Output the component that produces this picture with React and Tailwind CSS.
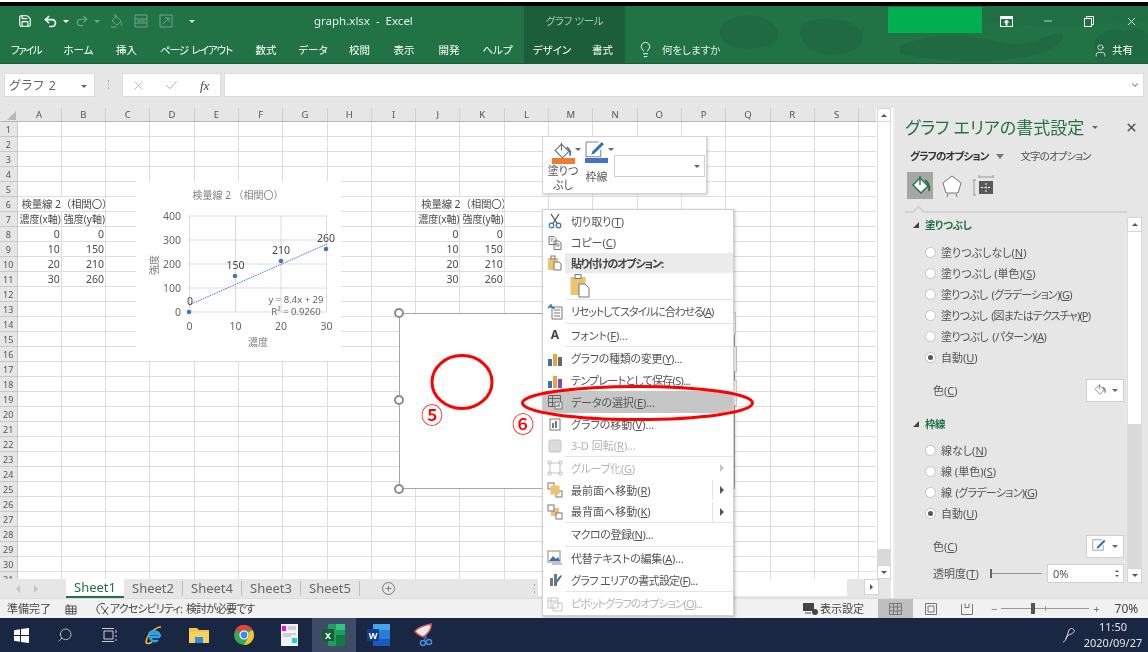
import React from 'react';
import { Save, Undo2, Redo2, Lightbulb, User, X, Minus, Check, ChevronDown, Plus, Search } from 'lucide-react';

const COLS = 'ABCDEFGHIJKLMNOPQRS'.split('').concat(['']);
const ROWS = Array.from({ length: 31 }, (_, i) => i + 1);
const CELLS = {
  '6-0': { t: '検量線 2（相関〇）', c: 'pl-[4px] text-[8.5px] tracking-[-0.2px] [font-feature-settings:normal] overflow-visible' },
  '7-0': { t: '濃度(x軸)', c: 'pl-[2px] text-[10px]' },
  '7-1': { t: '強度(y軸)', c: 'pl-[2px] text-[10px]' },
  '8-0': { t: '0', c: 'justify-end pr-[1px]' }, '8-1': { t: '0', c: 'justify-end pr-[1px]' },
  '9-0': { t: '10', c: 'justify-end pr-[1px]' }, '9-1': { t: '150', c: 'justify-end pr-[1px]' },
  '10-0': { t: '20', c: 'justify-end pr-[1px]' }, '10-1': { t: '210', c: 'justify-end pr-[1px]' },
  '11-0': { t: '30', c: 'justify-end pr-[1px]' }, '11-1': { t: '260', c: 'justify-end pr-[1px]' },
  '6-9': { t: '検量線 2（相関〇）', c: 'pl-[5px] text-[8.5px] tracking-[-0.2px] [font-feature-settings:normal] overflow-visible' },
  '7-9': { t: '濃度(x軸)', c: 'pl-[2px] text-[10px]' },
  '7-10': { t: '強度(y軸)', c: 'pl-[2px] text-[10px]' },
  '8-9': { t: '0', c: 'justify-end pr-[1px]' }, '8-10': { t: '0', c: 'justify-end pr-[1px]' },
  '9-9': { t: '10', c: 'justify-end pr-[1px]' }, '9-10': { t: '150', c: 'justify-end pr-[1px]' },
  '10-9': { t: '20', c: 'justify-end pr-[1px]' }, '10-10': { t: '210', c: 'justify-end pr-[1px]' },
  '11-9': { t: '30', c: 'justify-end pr-[1px]' }, '11-10': { t: '260', c: 'justify-end pr-[1px]' },
};

const Tri = ({ c = 'border-t-[#666]', cl = '' }) => (
  <span className={`inline-block w-0 h-0 border-x-[3px] border-x-transparent border-t-[3px] ${c} ${cl}`} />
);

function TitleBlobs() {
  return (
    <svg className="absolute left-[625px] top-0 pointer-events-none" width="523" height="58" viewBox="625 6 523 58">
      <path d="M720 28c4-10 22-14 36-12 16 2 24 14 22 22-3 9-26 12-40 10-12-2-20-10-18-20z" fill="#1f6a40" />
      <path d="M800 30c2-10 24-14 40-10 14 2 26 12 22 22-3 10-20 14-36 12-14-2-28-12-26-24z" fill="#1f6a40" />
      <path d="M900 46c30-14 70-12 100-4 22 6 44-4 60-10 10 8-10 20-30 24-40 8-90 6-130-2z" fill="#1f6a40" />
      <path d="M1095 40c6-10 22-14 30-8 10-8 23-2 23 6v26h-50c-4-8-6-16-3-24z" fill="#1f6a40" />
      <path d="M880 6h268v14c-50 6-110 8-160 2-40-4-80-6-108-16z" fill="#1f6a40" opacity="0.5" />
    </svg>
  );
}

function TopBar() {
  return (
    <div className="relative h-[58px] shrink-0 bg-[#217346] text-white flex flex-col">
      <TitleBlobs />
      <div className="relative flex h-[30px]">
        <div className="w-[314px] flex items-center pl-[18px]">
          <Save size={14} strokeWidth={2} className="shrink-0" />
          <Undo2 size={15} strokeWidth={2.6} className="ml-[11px] shrink-0" />
          <Tri c="border-t-white" cl="ml-[5px]" />
          <Redo2 size={14} className="ml-[6px] text-[#6fa688] shrink-0" />
          <Tri c="border-t-[#6fa688]" cl="ml-[5px]" />
          <svg width="16" height="16" viewBox="0 0 16 16" className="ml-[8px] shrink-0" fill="none" stroke="#6fa688"><path d="M4 8l4-5 5 5-4 4zM6 2h2v3M13 9c1 2 1 3 0 4M3 14h6" /></svg>
          <svg width="14" height="14" viewBox="0 0 14 14" className="ml-[10px] shrink-0" fill="none" stroke="#6fa688"><path d="M1 1h12v12H1zM1 5h12M1 9h12M3 7h8" /></svg>
          <svg width="14" height="14" viewBox="0 0 14 14" className="ml-[11px] shrink-0" fill="none" stroke="#6fa688"><path d="M1 1h12v12H1zM4 10l5-5M6 4h4v4" /></svg>
          <Tri c="border-t-[#ddd]" cl="ml-[16px]" />
        </div>
        <div className="w-[210px] flex items-center text-[11.5px] text-[#e8f0ea]">graph.xlsx&nbsp;&nbsp;-&nbsp;&nbsp;Excel</div>
        <div className="w-[101px] bg-[#1d5e3a] flex items-center justify-center text-[10.5px] tracking-[-0.3px] text-[#a9c6b4]">グラフ ツール</div>
        <div className="w-[263px]" />
        <div className="w-[94px] h-[26px] mt-[1px] bg-[#00b050]" />
        <div className="flex-1 flex items-center">
          <svg width="13" height="11" viewBox="0 0 13 11" className="ml-[18px] shrink-0"><rect x="0.5" y="0.5" width="12" height="10" fill="none" stroke="#fff" /><rect x="0.5" y="0.5" width="12" height="2.5" fill="#fff" /><path d="M6.5 3.5L3.5 6.5h2v3h2v-3h2z" fill="#fff" /></svg>
          <Minus size={12} strokeWidth={1.4} className="ml-[29px] shrink-0" />
          <svg width="10" height="11" viewBox="0 0 10 11" className="ml-[30px] shrink-0" fill="none" stroke="#fff"><rect x="0.5" y="2.5" width="7" height="8" /><path d="M2.5 2.5v-2h7v8h-2" /></svg>
          <X size={13} strokeWidth={1.4} className="ml-[31px] shrink-0" />
        </div>
      </div>
      <div className="relative flex h-[27px] items-stretch text-[10.5px]">
        <div className="w-[52px] flex items-center justify-center pt-[2px] tracking-[-1.5px]">ファイル</div>
        <div className="w-[53px] flex items-center justify-center pt-[2px]">ホーム</div>
        <div className="w-[43px] flex items-center justify-center pt-[2px]">挿入</div>
        <div className="w-[96px] flex items-center justify-center pt-[2px] tracking-[-1px]">ページ&nbsp;&nbsp;レイアウト</div>
        <div className="w-[44px] flex items-center justify-center pt-[2px]">数式</div>
        <div className="w-[50px] flex items-center justify-center pt-[2px]">データ</div>
        <div className="w-[43px] flex items-center justify-center pt-[2px]">校閲</div>
        <div className="w-[46px] flex items-center justify-center pt-[2px]">表示</div>
        <div className="w-[44px] flex items-center justify-center pt-[2px]">開発</div>
        <div className="w-[53px] flex items-center justify-center pt-[2px]">ヘルプ</div>
        <div className="w-[56px] bg-[#1d5e3a] flex items-center justify-center pt-[2px]">デザイン</div>
        <div className="w-[45px] bg-[#1d5e3a] flex items-center justify-center pt-[2px]">書式</div>
        <div className="w-[37px] flex items-center justify-center pl-[3px]">
          <Lightbulb size={17} strokeWidth={1.3} />
        </div>
        <div className="flex-1 flex items-center pt-[2px] text-[#e6efe9]">何をしますか</div>
        <div className="flex items-center pr-[15px] gap-[4px] pt-[2px]">
          <User size={15} strokeWidth={1.2} />
          <span>共有</span>
        </div>
      </div>
      <div className="relative h-[1px] bg-[#1a5c38]" />
    </div>
  );
}

function FormulaBar() {
  return (
    <div className="h-[44px] shrink-0 bg-[#e6e6e6] flex items-start pt-[9px] pl-[4px] text-[#666]">
      <div className="w-[91px] h-[24px] bg-white border border-[#dcdcdc] flex items-center pt-[2px] pl-[4px] pr-[7px] justify-between text-[12.5px] tracking-[1px]">
        <span>グラフ 2</span><Tri />
      </div>
      <div className="w-[27px] flex flex-col items-center gap-[2px] pt-[7px]">
        <span className="w-[1.5px] h-[1.5px] bg-[#aaa]" /><span className="w-[1.5px] h-[1.5px] bg-[#aaa]" /><span className="w-[1.5px] h-[1.5px] bg-[#aaa]" />
      </div>
      <div className="w-[99px] h-[24px] bg-white border border-[#dcdcdc] flex items-center pl-[8px]">
        <X size={15} strokeWidth={1.2} className="text-[#aaa]" />
        <Check size={15} strokeWidth={1.6} className="text-[#aaa] ml-[18px]" />
        <span className="ml-[21px] text-[13px] italic [font-family:'Liberation_Serif',serif] text-[#444]">fx</span>
      </div>
      <div className="ml-[3px] w-[920px] h-[24px] bg-white border border-[#dcdcdc] flex items-center justify-end pr-[3px]">
        <ChevronDown size={10} strokeWidth={2.5} className="text-[#777]" />
      </div>
    </div>
  );
}

function Sheet() {
  return (
    <div className="w-[879px] flex flex-col overflow-hidden h-[471px] bg-white">
      <div className="flex h-[14px] shrink-0 bg-[#e6e6e6] border-b border-[#b5b5b5]">
        <div className="w-[17.5px] shrink-0 relative">
          <span className="absolute right-[2px] bottom-[1px] w-0 h-0 border-l-[9px] border-l-transparent border-b-[9px] border-b-[#b8b8b8]" />
        </div>
        {COLS.map((c, i) => (
          <div key={i} className="w-[44.3px] shrink-0 flex items-center justify-center text-[9.5px] text-[#555] border-r border-[#cfcfcf]">{c}</div>
        ))}
      </div>
      {ROWS.map((r) => (
        <div key={r} className="flex h-[15px] shrink-0">
          <div className="w-[17.5px] shrink-0 bg-[#e6e6e6] border-b border-r border-[#c8c8c8] flex items-center justify-center text-[9px] text-[#555]">{r}</div>
          {COLS.map((c, i) => {
            const cell = CELLS[`${r}-${i}`];
            return (
              <div key={i} className={`w-[44.3px] shrink-0 border-r border-b border-[#dedede] flex items-center text-[10.5px] text-[#4a4a4a] whitespace-nowrap ${cell ? cell.c : ''} ${r === 6 && (i === 0 || i === 9) ? 'border-r-transparent' : ''}`}>
                {cell ? cell.t : null}
              </div>
            );
          })}
        </div>
      ))}
    </div>
  );
}

function Chart() {
  const pts = [[189, 312], [235, 276], [281, 261], [326, 249]];
  return (
    <svg className="absolute left-[136px] top-[181px] bg-white" width="205" height="180" viewBox="136 181 205 180">
      {[189.5, 235.5, 281, 326.5].map((x) => <line key={x} x1={x} x2={x} y1="216" y2="312" stroke="#dcdcdc" />)}
      {[216, 240, 264, 288, 312].map((y) => <line key={y} x1="189" x2="327" y1={y} y2={y} stroke="#dcdcdc" />)}
      <line x1="189" y1="305" x2="327" y2="244" stroke="#4472c4" strokeWidth="1" strokeDasharray="1.5 1" />
      {pts.map((p) => <circle key={p[0]} cx={p[0]} cy={p[1]} r="2.3" fill="#4472c4" />)}
      <text x="238" y="199" textAnchor="middle" fontSize="10" fill="#808080" className="[font-feature-settings:normal]">検量線 2 （相関〇）</text>
      {[[400, 220], [300, 244], [200, 268], [100, 292], [0, 316]].map(([v, y]) => (
        <text key={v} x="181" y={y} textAnchor="end" fontSize="10.5" fill="#666">{v}</text>
      ))}
      {[[0, 189.5], [10, 235.5], [20, 281], [30, 326.5]].map(([v, x]) => (
        <text key={v} x={x} y="330" textAnchor="middle" fontSize="10.5" fill="#666">{v}</text>
      ))}
      {[['0', 190, 305], ['150', 235.5, 269], ['210', 281, 254], ['260', 326, 242]].map(([v, x, y]) => (
        <text key={v} x={x} y={y} textAnchor="middle" fontSize="10.5" fill="#444">{v}</text>
      ))}
      <text x="258" y="346" textAnchor="middle" fontSize="10" fill="#808080">濃度</text>
      <text transform="translate(158 265) rotate(-90)" textAnchor="middle" fontSize="10" fill="#808080">強度</text>
      <text x="296" y="303" textAnchor="middle" fontSize="9.5" fill="#666">y = 8.4x + 29</text>
      <text x="296" y="315" textAnchor="middle" fontSize="9.5" fill="#666">R² = 0.9260</text>
    </svg>
  );
}

const Bucket = ({ w = 20, stroke = '#666', blue = '#2e75b6' }) => (
  <svg width={w} height={w} viewBox="0 0 20 20" fill="none" className="shrink-0">
    <path d="M9 3l7 7-6 6-7-7z" fill="#fff" stroke={stroke} />
    <path d="M9 9V1.5" stroke={stroke} />
    <path d="M14 6c3 2 4 5 3 8" stroke={blue} strokeWidth="1.6" />
  </svg>
);
const Pen = ({ w = 20 }) => (
  <svg width={w} height={w} viewBox="0 0 20 20" fill="none" className="shrink-0">
    <path d="M1 1h12M1 1v14h14V8" stroke="#888" />
    <path d="M6 13l1-3 9-9 2 2-9 9z" fill="#2e75b6" />
  </svg>
);

function MiniBar() {
  return (
    <div className="absolute left-[542px] top-[136px] w-[165px] h-[58px] bg-white border border-[#d4d4d4] shadow-[1px_1px_2px_rgba(0,0,0,0.2)] flex text-[11px] text-[#555]">
      <div className="w-[35px] pl-[5px] pt-[4px] flex flex-col items-center">
        <div className="relative w-[23px] h-[23px] shrink-0">
          <Bucket w={21} />
          <span className="absolute left-0 right-0 bottom-0 h-[6px] bg-[#ed7d31]" />
          <Tri cl="absolute right-[-6px] top-[7px]" />
        </div>
        <div className="leading-[14px] text-center whitespace-nowrap">塗りつ<br />ぶし</div>
      </div>
      <div className="w-[36px] pl-[1px] pt-[4px] flex flex-col items-center">
        <div className="relative w-[23px] h-[23px] shrink-0">
          <Pen w={21} />
          <span className="absolute left-0 right-0 bottom-[1px] h-[5px] bg-[#4472c4]" />
          <Tri cl="absolute right-[-6px] top-[7px]" />
        </div>
        <div className="mt-[6px] leading-[14px]">枠線</div>
      </div>
      <div className="mt-[18px] w-[91px] h-[22px] border border-[#d0d0d0] flex items-center justify-end pr-[4px]"><Tri /></div>
    </div>
  );
}

const Bars = ({ extra }) => (
  <svg width="16" height="16" viewBox="0 0 16 16">
    <rect x="1" y="8" width="4" height="7" fill="#2e75b6" />
    <rect x="6" y="3" width="4" height="12" fill="#e8a33d" />
    <rect x="11" y="6" width="4" height="9" fill={extra || '#666'} />
  </svg>
);
const Box = ({ d, stroke = '#777', fill = 'none' }) => (
  <svg width="16" height="16" viewBox="0 0 16 16" fill={fill} stroke={stroke}><path d={d} /></svg>
);
const Order = ({ front }) => (
  <svg width="16" height="16" viewBox="0 0 16 16">
    {front ? (
      <>
        <rect x="1" y="1" width="6" height="6" fill="#fff" stroke="#777" />
        <rect x="9" y="9" width="6" height="6" fill="#fff" stroke="#777" />
        <rect x="3.5" y="3.5" width="9" height="9" fill="#eec36f" />
      </>
    ) : (
      <>
        <rect x="4" y="4" width="8" height="8" fill="#eec36f" />
        <rect x="1" y="1" width="6" height="6" fill="#fff" stroke="#777" />
        <rect x="9" y="9" width="6" height="6" fill="#fff" stroke="#777" />
      </>
    )}
  </svg>
);
const Shears = () => (
  <svg width="14" height="16" viewBox="0 0 14 16" fill="none">
    <path d="M3 1l6.500 10M11 1L4.500 11" stroke="#555" strokeWidth="1.300" />
    <circle cx="3.500" cy="12.500" r="2.300" stroke="#2e75b6" strokeWidth="1.200" />
    <circle cx="10.500" cy="12.500" r="2.300" stroke="#2e75b6" strokeWidth="1.200" />
  </svg>
);
const DataSel = () => (
  <svg width="16" height="16" viewBox="0 0 16 16" fill="none">
    <path d="M1.500 1.500h12v11h-12zM1.500 4.500h12M5.500 1.500v11M1.500 8.500h6" stroke="#666" />
    <rect x="8" y="8" width="7" height="7" fill="#e6e6e6" stroke="#777" />
    <path d="M10 13v-2M12 13v-3.500" stroke="#555" />
  </svg>
);

const MENU = [
  { h: 'h-[22px]', i: <Shears />, t: '切り取り(', k: 'T', s: ')' },
  { h: 'h-[21px]', i: <Box d="M2 1.5h5l2 2v6H2zM7 6h5l2 2v6.5H7zM3.5 4h3M3.5 6h2M8.5 9h4M8.5 11h4" />, t: 'コピー(', k: 'C', s: ')' },
  { h: 'h-[20px]', head: true, tr: 'tracking-[-1.2px]', i: <svg width="16" height="16" viewBox="0 0 16 16"><rect x="1" y="3" width="10" height="12" fill="#eec36f" /><rect x="4" y="1" width="4" height="3" fill="#fff" stroke="#777" /><path d="M7 7h5l2 2v6H7z" fill="#fff" stroke="#777" /></svg>, t: '貼り付けのオプション:' },
  { h: 'h-[26px]', paste: true },
  { div: true },
  { h: 'h-[23px]', tr: 'tracking-[-1.1px]', i: <svg width="16" height="16" viewBox="0 0 16 16" fill="none"><path d="M5 3h10v12H5zM7 6h6M7 9h6M7 12h6" stroke="#777" /><path d="M1 4l3-3v2c2 0 3 1 3 2" stroke="#2e75b6" strokeWidth="1.5" /></svg>, t: 'リセットしてスタイルに合わせる(', k: 'A', s: ')' },
  { div: true },
  { h: 'h-[22px]', i: <span className="text-[12px] font-bold text-[#444]">A</span>, t: 'フォント(', k: 'F', s: ')...' },
  { div: true },
  { h: 'h-[23px]', tr: 'tracking-[-0.3px]', i: <Bars />, t: 'グラフの種類の変更(', k: 'Y', s: ')...' },
  { h: 'h-[21px]', tr: 'tracking-[-0.7px]', i: <Bars extra="#7a4fb5" />, t: 'テンプレートとして保存(', k: 'S', s: ')...' },
  { h: 'h-[22px]', sel: true, tr: 'tracking-[-0.1px]', i: <DataSel />, t: 'データの選択(', k: 'E', s: ')...' },
  { h: 'h-[22px]', i: <svg width="16" height="16" viewBox="0 0 16 16" fill="none"><rect x="3" y="3" width="10" height="11" stroke="#777" /><rect x="5" y="7" width="2" height="5" fill="#777" /><rect x="8" y="5" width="2" height="7" fill="#777" /></svg>, t: 'グラフの移動(', k: 'V', s: ')...' },
  { h: 'h-[21px]', dis: true, i: <svg width="14" height="14" viewBox="0 0 14 14"><rect x="1" y="1" width="12" height="12" rx="2" fill="#dcdcdc" stroke="#c4c4c4" /></svg>, t: '3-D 回転(', k: 'R', s: ')...' },
  { div: true },
  { h: 'h-[22px]', dis: true, arrow: true, tr: 'tracking-[-0.3px]', i: <Box d="M3 3h10v10H3zM1 1h3v3H1zM12 1h3v3h-3zM1 12h3v3H1zM12 12h3v3h-3z" stroke="#c4c4c4" />, t: 'グループ化(', k: 'G', s: ')' },
  { h: 'h-[22px]', arrow: true, line: true, i: <Order front />, t: '最前面へ移動(', k: 'R', s: ')' },
  { h: 'h-[21px]', arrow: true, line: true, i: <Order />, t: '最背面へ移動(', k: 'K', s: ')' },
  { div: true },
  { h: 'h-[23px]', tr: 'tracking-[-0.4px]', t: 'マクロの登録(', k: 'N', s: ')...' },
  { div: true },
  { h: 'h-[22px]', tr: 'tracking-[-0.2px]', i: <svg width="16" height="16" viewBox="0 0 16 16" fill="none"><rect x="1" y="1" width="12" height="11" stroke="#888" /><path d="M2 11l4-5 3 3 2-2 2 4z" fill="#2e75b6" /><path d="M5 14h10" stroke="#888" /></svg>, t: '代替テキストの編集(', k: 'A', s: ')...' },
  { h: 'h-[22px]', tr: 'tracking-[-0.6px]', i: <svg width="16" height="16" viewBox="0 0 16 16"><rect x="3" y="6" width="3" height="8" fill="#777" /><rect x="7" y="2" width="3" height="12" fill="#777" /><path d="M11 6l3-3 1 1-5 7-3 3z" fill="#2e75b6" /></svg>, t: 'グラフ エリアの書式設定(', k: 'F', s: ')...' },
  { div: true },
  { h: 'h-[23px]', dis: true, tr: 'tracking-[-1px]', i: <Box d="M1 2h10v10H1zM1 5h10M4 2v10M6 7h9v8H6z" stroke="#c4c4c4" fill="#fff" />, t: 'ピボットグラフのオプション(', k: 'O', s: ')...' },
];

function ContextMenu() {
  return (
    <div className="absolute left-[542px] top-[209px] w-[192px] bg-white border border-[#d0d0d0] shadow-[1px_1px_3px_rgba(0,0,0,0.25)] flex flex-col text-[11px] text-[#555]">
      {MENU.map((m, idx) => {
        if (m.div) return <div key={idx} className="h-[1px] ml-[22px] bg-[#e4e4e4]" />;
        if (m.paste) return (
          <div key={idx} className={`${m.h} flex items-center pl-[27px]`}>
            <svg width="20" height="24" viewBox="0 0 20 24"><rect x="0.5" y="3" width="15" height="18" fill="#eec36f" /><rect x="5" y="0.5" width="6" height="4" fill="#fff" stroke="#777" /><path d="M9 10h6l4 4v9H9z" fill="#fff" stroke="#777" /></svg>
          </div>
        );
        return (
          <div key={idx} className={`${m.h} flex items-center ${m.sel ? 'bg-[#c6c6c6]' : ''} ${m.dis ? 'text-[#b4b4b4]' : ''}`}>
            <div className="w-[24px] h-full flex items-center justify-center shrink-0">{m.i}</div>
            <div className={`flex-1 h-full flex items-center pl-[4px] whitespace-nowrap ${m.tr || ''} ${m.head ? 'bg-[#ebebeb] -ml-[2px] pl-[6px] font-bold text-[#444]' : ''}`}>
              <span>{m.t}{m.k ? <u>{m.k}</u> : null}{m.s}</span>
            </div>
            {m.arrow ? (
              <div className="flex items-center pr-[9px]">
                {m.line ? <span className="w-[1px] h-[20px] bg-[#e6e6e6] mr-[7px]" /> : null}
                <span className={`w-0 h-0 border-y-[4px] border-y-transparent border-l-[4px] ${m.dis ? 'border-l-[#c4c4c4]' : 'border-l-[#555]'}`} />
              </div>
            ) : null}
          </div>
        );
      })}
    </div>
  );
}

function SelectedChart() {
  const H = 'absolute w-[10px] h-[10px] rounded-full bg-white border-2 border-[#8c8c8c]';
  return (
    <>
      <div className="absolute left-[399px] top-[313px] w-[336px] h-[176px] bg-white border border-[#a6a6a6]" />
      <span className={`${H} left-[394px] top-[308px]`} />
      <span className={`${H} left-[394px] top-[395px]`} />
      <span className={`${H} left-[394px] top-[484px]`} />
      <div className="absolute left-[730px] top-[312px] w-[6px] h-[23px] bg-white border border-[#d0d0d0]" />
      <div className="absolute left-[730px] top-[346px] w-[7px] h-[26px] bg-white border border-[#c4c4c4]" />
      <div className="absolute left-[730px] top-[380px] w-[7px] h-[26px] bg-white border border-[#d0d0d0]" />
    </>
  );
}

function Annotations() {
  return (
    <>
      <svg className="absolute left-[430px] top-[353px]" width="65" height="58"><ellipse cx="32" cy="29" rx="30" ry="26.500" fill="none" stroke="#f00" strokeWidth="3" /></svg>
      <svg className="absolute left-[520px] top-[384px]" width="235" height="38"><ellipse cx="117.500" cy="19" rx="115" ry="16.500" fill="none" stroke="#f00" strokeWidth="3" /></svg>
      <span className="absolute left-[421px] top-[398px] text-[22px] leading-[32px] text-[#f00] font-medium">⑤</span>
      <span className="absolute left-[512px] top-[407px] text-[22px] leading-[32px] text-[#f00] font-medium">⑥</span>
    </>
  );
}

const Radio = ({ on, tr = '', children }) => (
  <div className="h-[21px] flex items-center pl-[18px] text-[11px] text-[#555]">
    <span className="w-[11px] h-[11px] rounded-full bg-white border border-[#c4c4c4] flex items-center justify-center shrink-0">
      {on ? <span className="w-[5px] h-[5px] rounded-full bg-[#555]" /> : null}
    </span>
    <span className={`ml-[5px] whitespace-nowrap ${tr}`}>{children}</span>
  </div>
);
const SecHead = ({ children }) => (
  <div className="h-[21px] flex items-center pl-[6px] text-[10.5px] tracking-[-0.4px] font-bold text-[#217346]">
    <span className="w-0 h-0 border-l-[6px] border-l-transparent border-b-[6px] border-b-[#444]" />
    <span className="ml-[6px]">{children}</span>
  </div>
);
const ColorBtn = ({ children }) => (
  <div className="w-[38px] h-[23px] bg-white border border-[#d0d0d0] flex items-center justify-center gap-[5px]">
    {children}<Tri />
  </div>
);

function Panel() {
  return (
    <div className="w-[255px] h-[490px] shrink-0 bg-[#e6e6e6] flex flex-col pl-[12px] border-l-[2px] border-l-[#ececec] ml-[2px] -mr-[2px] text-[#555]">
      <div className="h-[38px] flex items-center shrink-0 -ml-[2px]">
        <span className="text-[17px] text-[#217346] whitespace-nowrap">グラフ エリアの書式設定</span>
        <Tri cl="ml-[8px]" />
        <X size={13} strokeWidth={3} className="ml-[27px] text-[#555] shrink-0" />
      </div>
      <div className="h-[20px] flex items-center text-[10.5px] tracking-[-0.9px] shrink-0 pl-[3px]">
        <span className="font-bold text-[#333]">グラフのオプション</span>
        <span className="ml-[7px] w-0 h-0 border-x-[4px] border-x-transparent border-t-[5px] border-t-[#777]" />
        <span className="ml-[17px]">文字のオプション</span>
      </div>
      <div className="flex items-center h-[27px] mt-[6px] shrink-0">
        <div className="w-[26px] h-[27px] bg-[#a6a6a6] flex items-center justify-center">
          <svg width="22" height="22" viewBox="0 0 22 22" fill="none">
            <path d="M11 3l8 8-7 7-8-8z" fill="#fff" stroke="#217346" strokeWidth="1.400" />
            <path d="M11 10V1" stroke="#217346" strokeWidth="1.400" />
            <path d="M16 5c4 3 5 8 4 11" stroke="#217346" strokeWidth="2" />
          </svg>
        </div>
        <svg width="22" height="24" viewBox="0 0 22 24" className="ml-[8px]" fill="none">
          <path d="M11 2l9 7-3 10H5L2 9z" fill="#fff" stroke="#777" />
          <path d="M6 23l1-3M16 23l-1-3" stroke="#777" />
        </svg>
        <svg width="22" height="22" viewBox="0 0 22 22" className="ml-[10px]" fill="none">
          <rect x="6" y="6" width="14" height="13" fill="#595959" />
          <path d="M13 8v9M8 12.500h10" stroke="#fff" strokeDasharray="2 1.500" />
          <path d="M1 5v15M0 5h3M0 20h3M6 2h14M6 0v3M20 0v3" stroke="#999" />
        </svg>
      </div>
      <div className="relative h-[14px] shrink-0 border-b-[2px] border-[#d4d4d4] mr-[21px] -ml-[2px]">
        <span className="absolute left-[9px] bottom-[-5px] w-[9px] h-[9px] rotate-45 bg-[#e6e6e6] border-l-[2px] border-t-[2px] border-[#d4d4d4]" />
      </div>
      <div className="flex flex-1 min-h-0">
        <div className="w-[221px] shrink-0 pt-[1.500px]">
          <SecHead>塗りつぶし</SecHead>
          <div className="mt-[6px]">
            <Radio>塗りつぶしなし(<u>N</u>)</Radio>
            <Radio>塗りつぶし (単色)(<u>S</u>)</Radio>
            <Radio tr="tracking-[-0.8px]">塗りつぶし&nbsp;&nbsp;(グラデーション)(<u>G</u>)</Radio>
            <Radio tr="tracking-[-0.85px]">塗りつぶし&nbsp;&nbsp;(図またはテクスチャ)(<u>P</u>)</Radio>
            <Radio tr="tracking-[-0.7px]">塗りつぶし&nbsp;&nbsp;(パターン)(<u>A</u>)</Radio>
            <Radio on>自動(<u>U</u>)</Radio>
          </div>
          <div className="mt-[11px] h-[23px] flex items-center justify-between pl-[26px] pr-[4px] text-[11px]">
            <span>色(<u>C</u>)</span>
            <ColorBtn><Bucket w={14} /></ColorBtn>
          </div>
          <div className="mt-[12px]"><SecHead>枠線</SecHead></div>
          <div className="mt-[5px]">
            <Radio>線なし(<u>N</u>)</Radio>
            <Radio>線 (単色)(<u>S</u>)</Radio>
            <Radio tr="tracking-[-0.7px]">線&nbsp;&nbsp;(グラデーション)(<u>G</u>)</Radio>
            <Radio on>自動(<u>U</u>)</Radio>
          </div>
          <div className="mt-[11px] h-[23px] flex items-center justify-between pl-[26px] pr-[4px] text-[11px]">
            <span>色(<u>C</u>)</span>
            <ColorBtn><Pen w={15} /></ColorBtn>
          </div>
          <div className="mt-[6px] h-[19px] flex items-center pl-[26px] pr-[4px] text-[11px]">
            <span className="w-[56px] whitespace-nowrap">透明度(<u>T</u>)</span>
            <div className="relative w-[52px] h-[1px] bg-[#999] ml-[1px]">
              <span className="absolute left-0 top-[-4px] w-[2px] h-[9px] bg-[#666]" />
            </div>
            <div className="ml-[5px] flex-1 h-[19px] bg-white border border-[#d0d0d0] flex items-center justify-between pl-[5px] pr-[4px]">
              <span>0%</span>
              <span className="flex flex-col gap-[3px]"><span className="w-0 h-0 border-x-[2px] border-x-transparent border-b-[2px] border-b-[#555]" /><span className="w-0 h-0 border-x-[2px] border-x-transparent border-t-[2px] border-t-[#555]" /></span>
            </div>
          </div>
        </div>
        <div className="w-[15px] ml-[-1px] mt-[4px] h-[366px] flex flex-col shrink-0 bg-[#dadada]">
          <div className="h-[15px] bg-white border border-[#d4d4d4] flex items-center justify-center"><span className="w-0 h-0 border-x-[3px] border-x-transparent border-b-[3px] border-b-[#555]" /></div>
          <div className="h-[192px] bg-white border-x border-[#e0e0e0]" />
          <div className="flex-1" />
          <div className="h-[15px] bg-white border border-[#d4d4d4] flex items-center justify-center"><Tri c="border-t-[#555]" /></div>
        </div>
      </div>
    </div>
  );
}

function SheetTabs() {
  const others = ['Sheet2', 'Sheet4', 'Sheet3', 'Sheet5'];
  return (
    <div className="h-[19px] shrink-0 bg-[#e6e6e6] flex text-[13px] text-[#666]">
      <div className="w-[66px] flex items-center pl-[16px] gap-[14px]">
        <span className="w-0 h-0 border-y-[4px] border-y-transparent border-r-[4px] border-r-[#c4c4c4]" />
        <span className="w-0 h-0 border-y-[4px] border-y-transparent border-l-[4px] border-l-[#c4c4c4]" />
      </div>
      <div className="w-[58px] bg-white border-b-2 border-[#217346] text-[#217346] flex items-center justify-center">Sheet1</div>
      {others.map((s) => (
        <div key={s} className="w-[59px] flex items-center justify-center border-r border-[#bdbdbd] my-[2px]">{s}</div>
      ))}
      <div className="w-[56px] flex items-center justify-center">
        <span className="w-[13px] h-[13px] rounded-full border border-[#777] flex items-center justify-center"><Plus size={9} /></span>
      </div>
      <div className="w-[122px] flex flex-col items-end justify-center gap-[2px] pr-[3px]">
        <span className="w-[1.500px] h-[1.500px] bg-[#aaa]" /><span className="w-[1.500px] h-[1.500px] bg-[#aaa]" /><span className="w-[1.500px] h-[1.500px] bg-[#aaa]" />
      </div>
      <div className="w-[309px] bg-white mb-[2px]" />
      <div className="flex-1 flex justify-end">
        <div className="w-[15px] h-[16px] bg-white border border-[#d4d4d4] flex items-center justify-center mr-[12px]"><span className="w-0 h-0 border-y-[3px] border-y-transparent border-l-[3px] border-l-[#555]" /></div>
      </div>
    </div>
  );
}

function StatusBar() {
  return (
    <div className="h-[20px] shrink-0 bg-[#f1f1f1] border-t border-[#dcdcdc] flex items-center text-[11px] text-[#444] whitespace-nowrap">
      <span className="w-[65px] pl-[7px]">準備完了</span>
      <svg width="12" height="12" viewBox="0 0 12 12" fill="none" stroke="#555"><path d="M1 3h10v8H1zM3 1v3M1 6h10M1 8.500h10M4 3v8M7.500 3v8" /></svg>
      <svg width="15" height="15" viewBox="0 0 15 15" className="ml-[17px]" fill="none" stroke="#444"><path d="M11 3A5.500 5.500 0 1 0 6 13" /><path d="M7 5l7 9M14 6l-5 7" /></svg>
      <span className="ml-[1px] w-[693px] tracking-[-0.9px]">アクセシビリティ:&nbsp;&nbsp;検討が必要です</span>
      <svg width="16" height="14" viewBox="0 0 16 14"><rect x="0" y="1" width="11" height="8" fill="#444" /><path d="M2 11h6" stroke="#444" /><circle cx="12" cy="10" r="3" fill="#444" /></svg>
      <span className="ml-[1px] w-[58px] text-[11px]">表示設定</span>
      <div className="w-[35px] h-[19px] bg-[#bfbfbf] flex items-center justify-center">
        <svg width="13" height="12" viewBox="0 0 13 12" fill="none" stroke="#777"><path d="M.5.5h12v11H.5zM.5 4h12M.5 8h12M4.500.5v11M8.500.5v11" /></svg>
      </div>
      <div className="w-[36px] flex justify-center">
        <svg width="12" height="12" viewBox="0 0 12 12" fill="none" stroke="#777"><path d="M.5.5h11v11H.5zM3 3h6v6H3z" /></svg>
      </div>
      <div className="w-[36px] flex justify-center">
        <svg width="12" height="12" viewBox="0 0 12 12" fill="none" stroke="#777"><path d="M.5 1v10.500h11V1M4 .5v4h4v-4" /></svg>
      </div>
      <span className="ml-[6px] text-[#777]">−</span>
      <div className="relative w-[88px] h-[1px] bg-[#999] mx-[4px]">
        <span className="absolute left-[30px] top-[-5px] w-[4px] h-[11px] bg-[#555]" />
        <span className="absolute left-[44px] top-[-2px] w-[1px] h-[5px] bg-[#999]" />
      </div>
      <span className="text-[#777]">+</span>
      <span className="ml-[15px] text-[12px]">70%</span>
    </div>
  );
}

const Slot = ({ c, children }) => <div className={`h-full flex items-center justify-center ${c}`}>{children}</div>;

function Taskbar() {
  return (
    <div className="h-[34px] shrink-0 bg-[#1a2742] flex items-stretch text-white">
      <Slot c="w-[43px]">
        <svg width="15" height="15" viewBox="0 0 15 15" fill="#fff"><path d="M0 2.200l6-.9v5.700H0zM7 1.100l8-1.100v7H7zM0 8h6v5.700l-6-.9zM7 8h8v7l-8-1.100z" /></svg>
      </Slot>
      <Slot c="w-[44px]"><Search size={16} strokeWidth={1.2} className="-scale-x-100 text-[#ddd]" /></Slot>
      <Slot c="w-[43px]">
        <svg width="16" height="14" viewBox="0 0 16 14" fill="none" stroke="#ccc"><path d="M3 3h9v8H3zM1 .5h12M1 13.500h12M15 2v3M15 7v2M15 11v2" /></svg>
      </Slot>
      <Slot c="w-[47px]">
        <svg width="22" height="22" viewBox="0 0 22 22" fill="none">
          <path d="M18 3C13 3 4 10 3 18c0 2 3 2 6 0" stroke="#f2b632" strokeWidth="1.600" />
          <path d="M17 13h-10c1 5 6 5 8 3M6 10a6 6 0 0 1 11 3M7 10h8" stroke="#2fa3e6" strokeWidth="2.400" />
        </svg>
      </Slot>
      <Slot c="w-[44px]">
        <svg width="20" height="17" viewBox="0 0 20 17"><path d="M0 1h8l2 2h10v13H0z" fill="#f5c342" /><rect x="0" y="5" width="20" height="11" fill="#f7d063" /><rect x="6" y="10" width="8" height="6" fill="#2f8fd8" /></svg>
      </Slot>
      <Slot c="w-[46px]">
        <svg width="20" height="20" viewBox="0 0 20 20">
          <circle cx="10" cy="10" r="10" fill="#34a853" />
          <path d="M10 0a10 10 0 0 1 8.660 5H10a5 5 0 0 0-4.500 2.800L1.700 4.400A10 10 0 0 1 10 0z" fill="#ea4335" />
          <path d="M18.660 5A10 10 0 0 1 10 20l4.300-7.500A5 5 0 0 0 14.300 7.500z" fill="#fbc02d" />
          <circle cx="10" cy="10" r="4" fill="#4285f4" stroke="#fff" strokeWidth="1.200" />
        </svg>
      </Slot>
      <Slot c="w-[45px]">
        <svg width="17" height="22" viewBox="0 0 17 22"><rect width="17" height="22" fill="#f2f2f2" /><rect x="1" y="2" width="4" height="5" fill="#f0f" /><rect x="11" y="14" width="5" height="5" fill="#19d3da" /><path d="M7 3h8M7 5h8M2 10h13M2 12h8" stroke="#999" strokeWidth=".8" /></svg>
      </Slot>
      <Slot c="w-[44px] bg-[#3f4c66]">
        <svg width="24" height="22" viewBox="0 0 24 22">
          <rect x="6" y="0" width="17" height="22" fill="#1f9e60" />
          <rect x="14" y="0" width="9" height="6" fill="#33c481" />
          <rect x="14" y="11" width="9" height="11" fill="#107c41" />
          <rect x="0" y="5" width="12" height="12" fill="#185c37" />
          <text x="6" y="14.500" textAnchor="middle" fontSize="9" fontWeight="700" fill="#fff">X</text>
        </svg>
      </Slot>
      <Slot c="w-[45px]">
        <svg width="24" height="22" viewBox="0 0 24 22">
          <rect x="6" y="0" width="17" height="22" fill="#2b7cd3" />
          <rect x="6" y="0" width="17" height="6" fill="#41a5ee" />
          <rect x="6" y="15" width="17" height="7" fill="#185abd" />
          <rect x="0" y="5" width="12" height="12" fill="#103f91" />
          <text x="6" y="14.500" textAnchor="middle" fontSize="9" fontWeight="700" fill="#fff">W</text>
        </svg>
      </Slot>
      <Slot c="w-[44px]">
        <svg width="22" height="24" viewBox="0 0 22 24" fill="none">
          <path d="M3 8C8 3 14 2 19 1c1 5-4 11-8 13C7 12 4 11 3 8z" fill="#e8e8e8" stroke="#d9534f" strokeWidth="1.500" />
          <circle cx="11" cy="20" r="2.500" stroke="#3f8fd8" strokeWidth="1.500" />
          <circle cx="17" cy="19" r="2.500" stroke="#3f8fd8" strokeWidth="1.500" />
          <path d="M12 18l2-6M16 17l-4-5" stroke="#3f8fd8" />
        </svg>
      </Slot>
      <div className="flex-1 flex items-center justify-end">
        <svg width="14" height="16" viewBox="0 0 14 16" fill="none" stroke="#ddd" className="mr-[6px]"><path d="M1 15c2 0 3-3 4-6l2-6c1-2 4-2 5 0s-1 3-3 4-5 2-5 5" /></svg>
        <div className="w-[62px] mr-[4px] flex flex-col items-center text-[11px] leading-[16px] text-[#e4e4e4]">
          <span>11:50</span><span>2020/09/27</span>
        </div>
      </div>
    </div>
  );
}

export default function App() {
  return (
    <div className="relative w-[1148px] h-[652px] overflow-hidden flex flex-col bg-white [font-family:'Noto_Sans','Noto_Sans_CJK_JP',sans-serif] [font-feature-settings:'palt'] leading-none blur-[0.35px]">
      <div className="h-[2px] shrink-0 bg-white" />
      <div className="h-[4px] shrink-0 bg-black" />
      <TopBar />
      <FormulaBar />
      <div className="flex h-[490px] shrink-0">
        <div className="w-[891px] flex flex-col shrink-0">
          <div className="flex h-[471px] shrink-0">
            <Sheet />
            <div className="w-[14px] ml-[1px] flex flex-col bg-[#dadada]">
              <div className="h-[14px] bg-white border border-[#d4d4d4] flex items-center justify-center"><span className="w-0 h-0 border-x-[3px] border-x-transparent border-b-[3px] border-b-[#555]" /></div>
              <div className="h-[427px] bg-white border-x border-[#e0e0e0]" />
              <div className="flex-1" />
              <div className="h-[14px] bg-white border border-[#d4d4d4] flex items-center justify-center"><Tri c="border-t-[#555]" /></div>
            </div>
          </div>
          <SheetTabs />
        </div>
        <Panel />
      </div>
      <StatusBar />
      <Taskbar />
      <Chart />
      <SelectedChart />
      <MiniBar />
      <ContextMenu />
      <Annotations />
    </div>
  );
}
